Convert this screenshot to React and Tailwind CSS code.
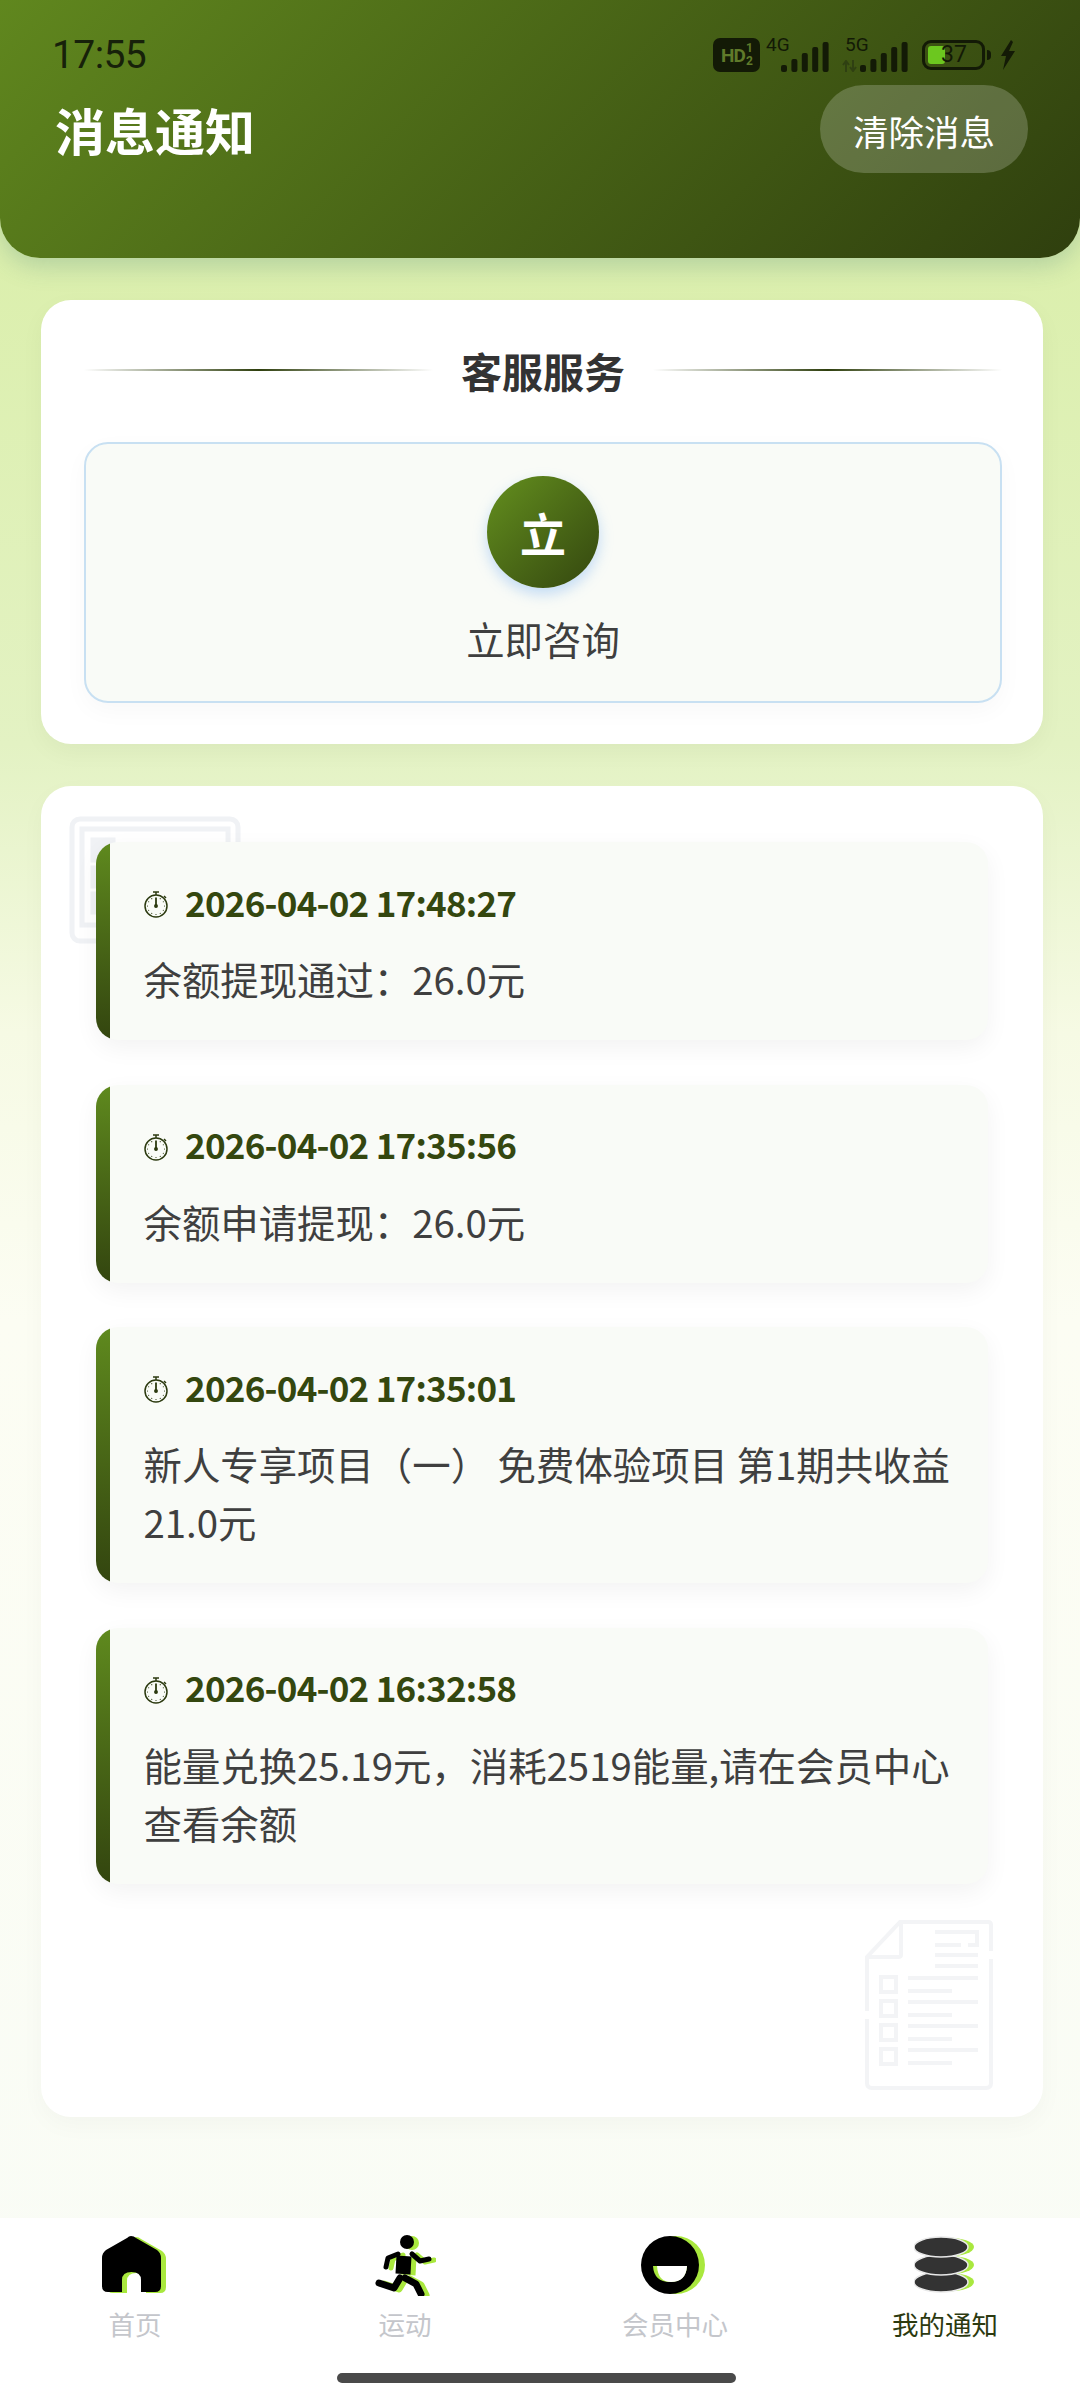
const CJK = '"Noto Sans CJK SC", "Noto Sans", sans-serif';
const INK = '#131a06';

function Signal() {
  const hs = [7, 13, 19, 25, 30];
  return (
    <svg width="48" height="31" viewBox="0 0 48 31" className="block">
      {hs.map((h, i) => (
        <rect key={i} x={i * 10.4} y={31 - h} width="6" height={h} rx="2" fill={INK} />
      ))}
    </svg>
  );
}

function StatusBar() {
  return (
    <div className="flex items-center justify-between h-[36px] pl-[52px] pr-[64px] mt-[37px]">
      <span className="text-[39px] leading-[36px] tracking-[-0.6px] text-[#17210a] font-normal" style={{ fontFamily: 'Roboto, sans-serif' }}>17:55</span>
      <div className="flex items-center" style={{ fontFamily: 'Roboto, sans-serif', color: INK }}>
        <div className="w-[47px] h-[34px] rounded-[7px] bg-[#131a06] flex items-center justify-center text-[#5f7a2a] text-[19px] font-bold tracking-tighter leading-none">HD<span className="text-[12px] leading-[13px] text-center ml-[1px]">1<br />2</span></div>
        <div className="relative w-[62px] h-[34px] ml-[6px]">
          <span className="absolute left-0 top-[-3px] text-[19px] leading-[20px]">4G</span>
          <div className="absolute left-[15px] top-[3px]"><Signal /></div>
        </div>
        <div className="relative w-[63px] h-[34px] ml-[17px]">
          <span className="absolute left-0 top-[-3px] text-[19px] leading-[20px]">5G</span>
          <svg className="absolute left-[-3px] top-[22px]" width="15" height="12" viewBox="0 0 15 12" fill="none" stroke="#2f4012" strokeWidth="2"><path d="M4 12 V2 M1 5 L4 1 L7 5 M11 0 V10 M8 7 L11 11 L14 7" /></svg>
          <div className="absolute left-[15px] top-[3px]"><Signal /></div>
        </div>
        <div className="relative w-[63px] h-[30px] ml-[14px] rounded-[9px] border-[3px] border-[#131a06] overflow-hidden">
          <div className="absolute left-[3px] top-[3px] bottom-[3px] w-[17px] rounded-[3px] bg-[#6cc71f]" />
          <span className="absolute left-[16px] top-[0px] text-[23px] leading-[24px]">37</span>
        </div>
        <div className="w-[4px] h-[10px] rounded-r bg-[#131a06] ml-[2px]" />
        <svg width="16" height="30" viewBox="0 0 16 30" className="ml-[9px]"><path d="M11 0 L1 16 L6 16 L3 30 L15 11 L9 11 L13 2 Z" fill={INK} /></svg>
      </div>
    </div>
  );
}

function DocLeft() {
  return (
    <svg className="absolute left-[28px] top-[30px]" width="172" height="128" viewBox="0 0 172 128" fill="none" stroke="#f0f2f5" strokeWidth="5">
      <rect x="3" y="3" width="166" height="122" rx="8" />
      <rect x="13" y="13" width="146" height="96" />
      <rect x="24" y="24" width="20" height="20" fill="#f0f2f5" />
      <rect x="24" y="52" width="20" height="18" fill="#f0f2f5" />
      <rect x="24" y="78" width="20" height="18" fill="#f0f2f5" />
    </svg>
  );
}

function DocRight() {
  return (
    <svg className="absolute right-[49px] bottom-[26px]" width="130" height="172" viewBox="0 0 130 172" fill="none" stroke="#f3f4f6" strokeWidth="4">
      <path d="M127 32 V6 Q127 3 124 3 H36 L3 38 V92" />
      <path d="M3 100 V164 Q3 169 8 169 H122 Q127 169 127 164 V40" />
      <path d="M37 3 V36 Q37 38 34 38 H3" />
      <path d="M71 13 H113 V26 H104 M97 26 H71 Z" />
      <path d="M71 36 H114 M71 47 H114" />
      <rect x="17" y="58" width="15" height="15" /><path d="M44 59 H114 M44 72 H88" />
      <rect x="17" y="82" width="15" height="15" /><path d="M44 83 H114 M44 96 H88" />
      <rect x="17" y="106" width="15" height="15" /><path d="M44 107 H114 M44 120 H88" />
      <rect x="17" y="130" width="15" height="15" /><path d="M44 131 H114 M44 144 H88" />
    </svg>
  );
}

function Clock() {
  const ticks = [0, 30, 60, 90, 120, 150, 180, 210, 240, 270, 300, 330];
  return (
    <svg width="24" height="27" viewBox="0 0 24 27" fill="none" stroke="#2c3a10" strokeWidth="1.5" className="shrink-0">
      <circle cx="12" cy="15" r="11" />
      <path d="M9 1 H15 M12 1 V4 M20 5 L22 7" />
      <path d="M12 7 V15" strokeWidth="1.8" />
      <circle cx="12" cy="15" r="1.2" fill="#2c3a10" />
      {ticks.map((a) => (
        <circle key={a} cx={12 + 8.5 * Math.sin((a * Math.PI) / 180)} cy={15 - 8.5 * Math.cos((a * Math.PI) / 180)} r="0.6" fill="#2c3a10" stroke="none" />
      ))}
    </svg>
  );
}

function Message({ time, text }) {
  return (
    <div className="flex rounded-[22px] overflow-hidden bg-[#f9fbf7] shadow-[0_8px_24px_rgba(0,0,0,0.05)] relative">
      <div className="w-[14px] shrink-0 bg-gradient-to-b from-[#5f8a1e] to-[#33450f]" />
      <div className="flex-1 pl-[33.5px] pr-[30px] pt-[35px] pb-[33px]">
        <div className="flex items-center gap-[17.5px] h-[50px] mb-[22px]">
          <div className="pt-[5px] flex"><Clock /></div>
          <span className="text-[35px] font-bold text-[#34470f] tracking-[-0.76px]">{time}</span>
        </div>
        <div className="text-[38.4px] leading-[58px] text-[#3f3f3f]">{text}</div>
      </div>
    </div>
  );
}

const G = '#a9e83e';

function HomeIcon() {
  const d = 'M29 0 Q27 0 25 2 L4 14 Q0 17 0 22 V50 Q0 56 6 56 H20 V44 Q20 36 29.5 36 Q39 36 39 44 V56 H53 Q59 56 59 50 V22 Q59 17 55 14 L34 2 Q32 0 29 0 Z';
  return (
    <svg width="66" height="58" viewBox="0 0 66 58">
      <path d={d} fill={G} transform="translate(5 1)" />
      <path d={d} fill="#000" />
    </svg>
  );
}

function RunIcon() {
  const Figure = ({ c, dx = 0, dy = 0 }) => (
    <g transform={`translate(${dx} ${dy})`} fill="none" stroke={c} strokeLinecap="round" strokeLinejoin="round">
      <circle cx="33" cy="8" r="7" fill={c} stroke="none" />
      <path d="M30 22 L29 40" strokeWidth="15" strokeLinecap="butt" />
      <path d="M38 20 L46 27 L55 25" strokeWidth="5" />
      <path d="M24 20 L14 24 L12 33" strokeWidth="5" />
      <path d="M31 44 L42 50 L47 60" strokeWidth="7" />
      <path d="M26 44 L20 54 L5 49" strokeWidth="7" />
    </g>
  );
  return (
    <svg width="62" height="62" viewBox="0 0 62 62">
      <Figure c={G} dx={5} dy={1} />
      <Figure c="#000" />
    </svg>
  );
}

function MemberIcon() {
  return (
    <svg width="68" height="60" viewBox="0 0 68 60">
      <circle cx="35" cy="30" r="29" fill={G} />
      <circle cx="29" cy="30" r="29" fill="#000" />
      <path d="M12 31 H46 Q45 47 29 47 Q13 47 12 31 Z" fill={G} />
      <path d="M16 31 H46 Q45 47 30 47 Q17 47 16 31 Z" fill="#fff" />
    </svg>
  );
}

function StackIcon() {
  const ys = [46, 29, 11];
  return (
    <svg width="62" height="58" viewBox="0 0 62 58">
      {ys.map((y) => <ellipse key={`g${y}`} cx="33" cy={y} rx="27" ry="9.5" fill={G} />)}
      {ys.map((y) => <ellipse key={y} cx="27" cy={y} rx="27" ry="10" fill="#333333" stroke="#e8e8e8" strokeWidth="1.5" />)}
    </svg>
  );
}

function NavItem({ icon, label, active }) {
  return (
    <div className="flex flex-col items-center">
      <div className="h-[62px] flex items-center justify-center">{icon}</div>
      <span className={`mt-[10px] text-[26.5px] leading-[36px] ${active ? 'text-[#2c3a10]' : 'text-[#c4c6cb]'}`}>{label}</span>
    </div>
  );
}

export default function App() {
  return (
    <div className="w-[1080px] h-[2400px] flex flex-col bg-[linear-gradient(180deg,#d9efa9_0%,#dbefac_10%,#e3f2c3_31%,#f6fae4_43%,#fcfdf3_55%,#f9fcf6_100%)] overflow-hidden" style={{ fontFamily: CJK }}>
      <header className="h-[258px] shrink-0 rounded-b-[40px] bg-[linear-gradient(135deg,#60871e_0%,#2f3f0e_100%)] shadow-[0_8px_24px_rgba(60,120,120,0.25)]">
        <StatusBar />
        <div className="flex items-center justify-between pl-[55px] pr-[52px] mt-[12px]">
          <h1 className="text-[50px] font-bold text-white leading-[88px]">消息通知</h1>
          <button className="w-[208px] h-[88px] rounded-[44px] bg-white/20 text-white text-[35.5px] pt-[4px]">清除消息</button>
        </div>
      </header>

      <main className="pl-[41px] pr-[37px] pt-[42px]">
        <section className="h-[444px] rounded-[30px] bg-white shadow-[0_8px_24px_rgba(0,0,0,0.04)] pl-[43px] pr-[41px] pt-[42px]">
          <div className="flex items-center h-[56px]">
            <div className="flex-1 h-[2px] bg-gradient-to-r from-transparent via-[#2f3f0e] to-transparent" />
            <h2 className="mx-[28px] text-[41px] font-bold leading-[56px] text-[#333333]">客服服务</h2>
            <div className="flex-1 h-[2px] bg-gradient-to-r from-transparent via-[#2f3f0e] to-transparent" />
          </div>
          <div className="mt-[44px] h-[261px] rounded-[24px] border-2 border-[#c8e0f2] bg-[#f9fbf7] shadow-[0_8px_24px_rgba(0,0,0,0.03)] flex flex-col items-center pt-[32px]">
            <div className="w-[112px] h-[112px] rounded-full bg-gradient-to-br from-[#64901e] to-[#34470f] flex items-center justify-center text-white text-[46px] font-bold shadow-[0_6px_14px_rgba(110,170,240,0.4)]">立</div>
            <div className="mt-[22px] text-[38.4px] leading-[57px] text-[#3f3f3f]">立即咨询</div>
          </div>
        </section>

        <section className="relative mt-[42px] h-[1331px] rounded-[30px] bg-white shadow-[0_8px_24px_rgba(0,0,0,0.03)] px-[55px] pt-[56px] flex flex-col gap-[44.5px]">
          <DocLeft />
          <DocRight />
          <Message time="2026-04-02 17:48:27" text="余额提现通过：26.0元" />
          <Message time="2026-04-02 17:35:56" text="余额申请提现：26.0元" />
          <Message time="2026-04-02 17:35:01" text="新人专享项目（一） 免费体验项目 第1期共收益21.0元" />
          <Message time="2026-04-02 16:32:58" text="能量兑换25.19元，消耗2519能量,请在会员中心查看余额" />
        </section>
      </main>

      <div className="flex-1" />

      <nav className="h-[182px] shrink-0 bg-white flex flex-col">
        <div className="grid grid-cols-4 pt-[16px]">
          <NavItem icon={<HomeIcon />} label="首页" />
          <NavItem icon={<RunIcon />} label="运动" />
          <NavItem icon={<MemberIcon />} label="会员中心" />
          <NavItem icon={<StackIcon />} label="我的通知" active />
        </div>
        <div className="mt-[31px] ml-[337px] w-[399px] h-[10px] rounded-full bg-[#4a4a4a]" />
      </nav>
    </div>
  );
}
